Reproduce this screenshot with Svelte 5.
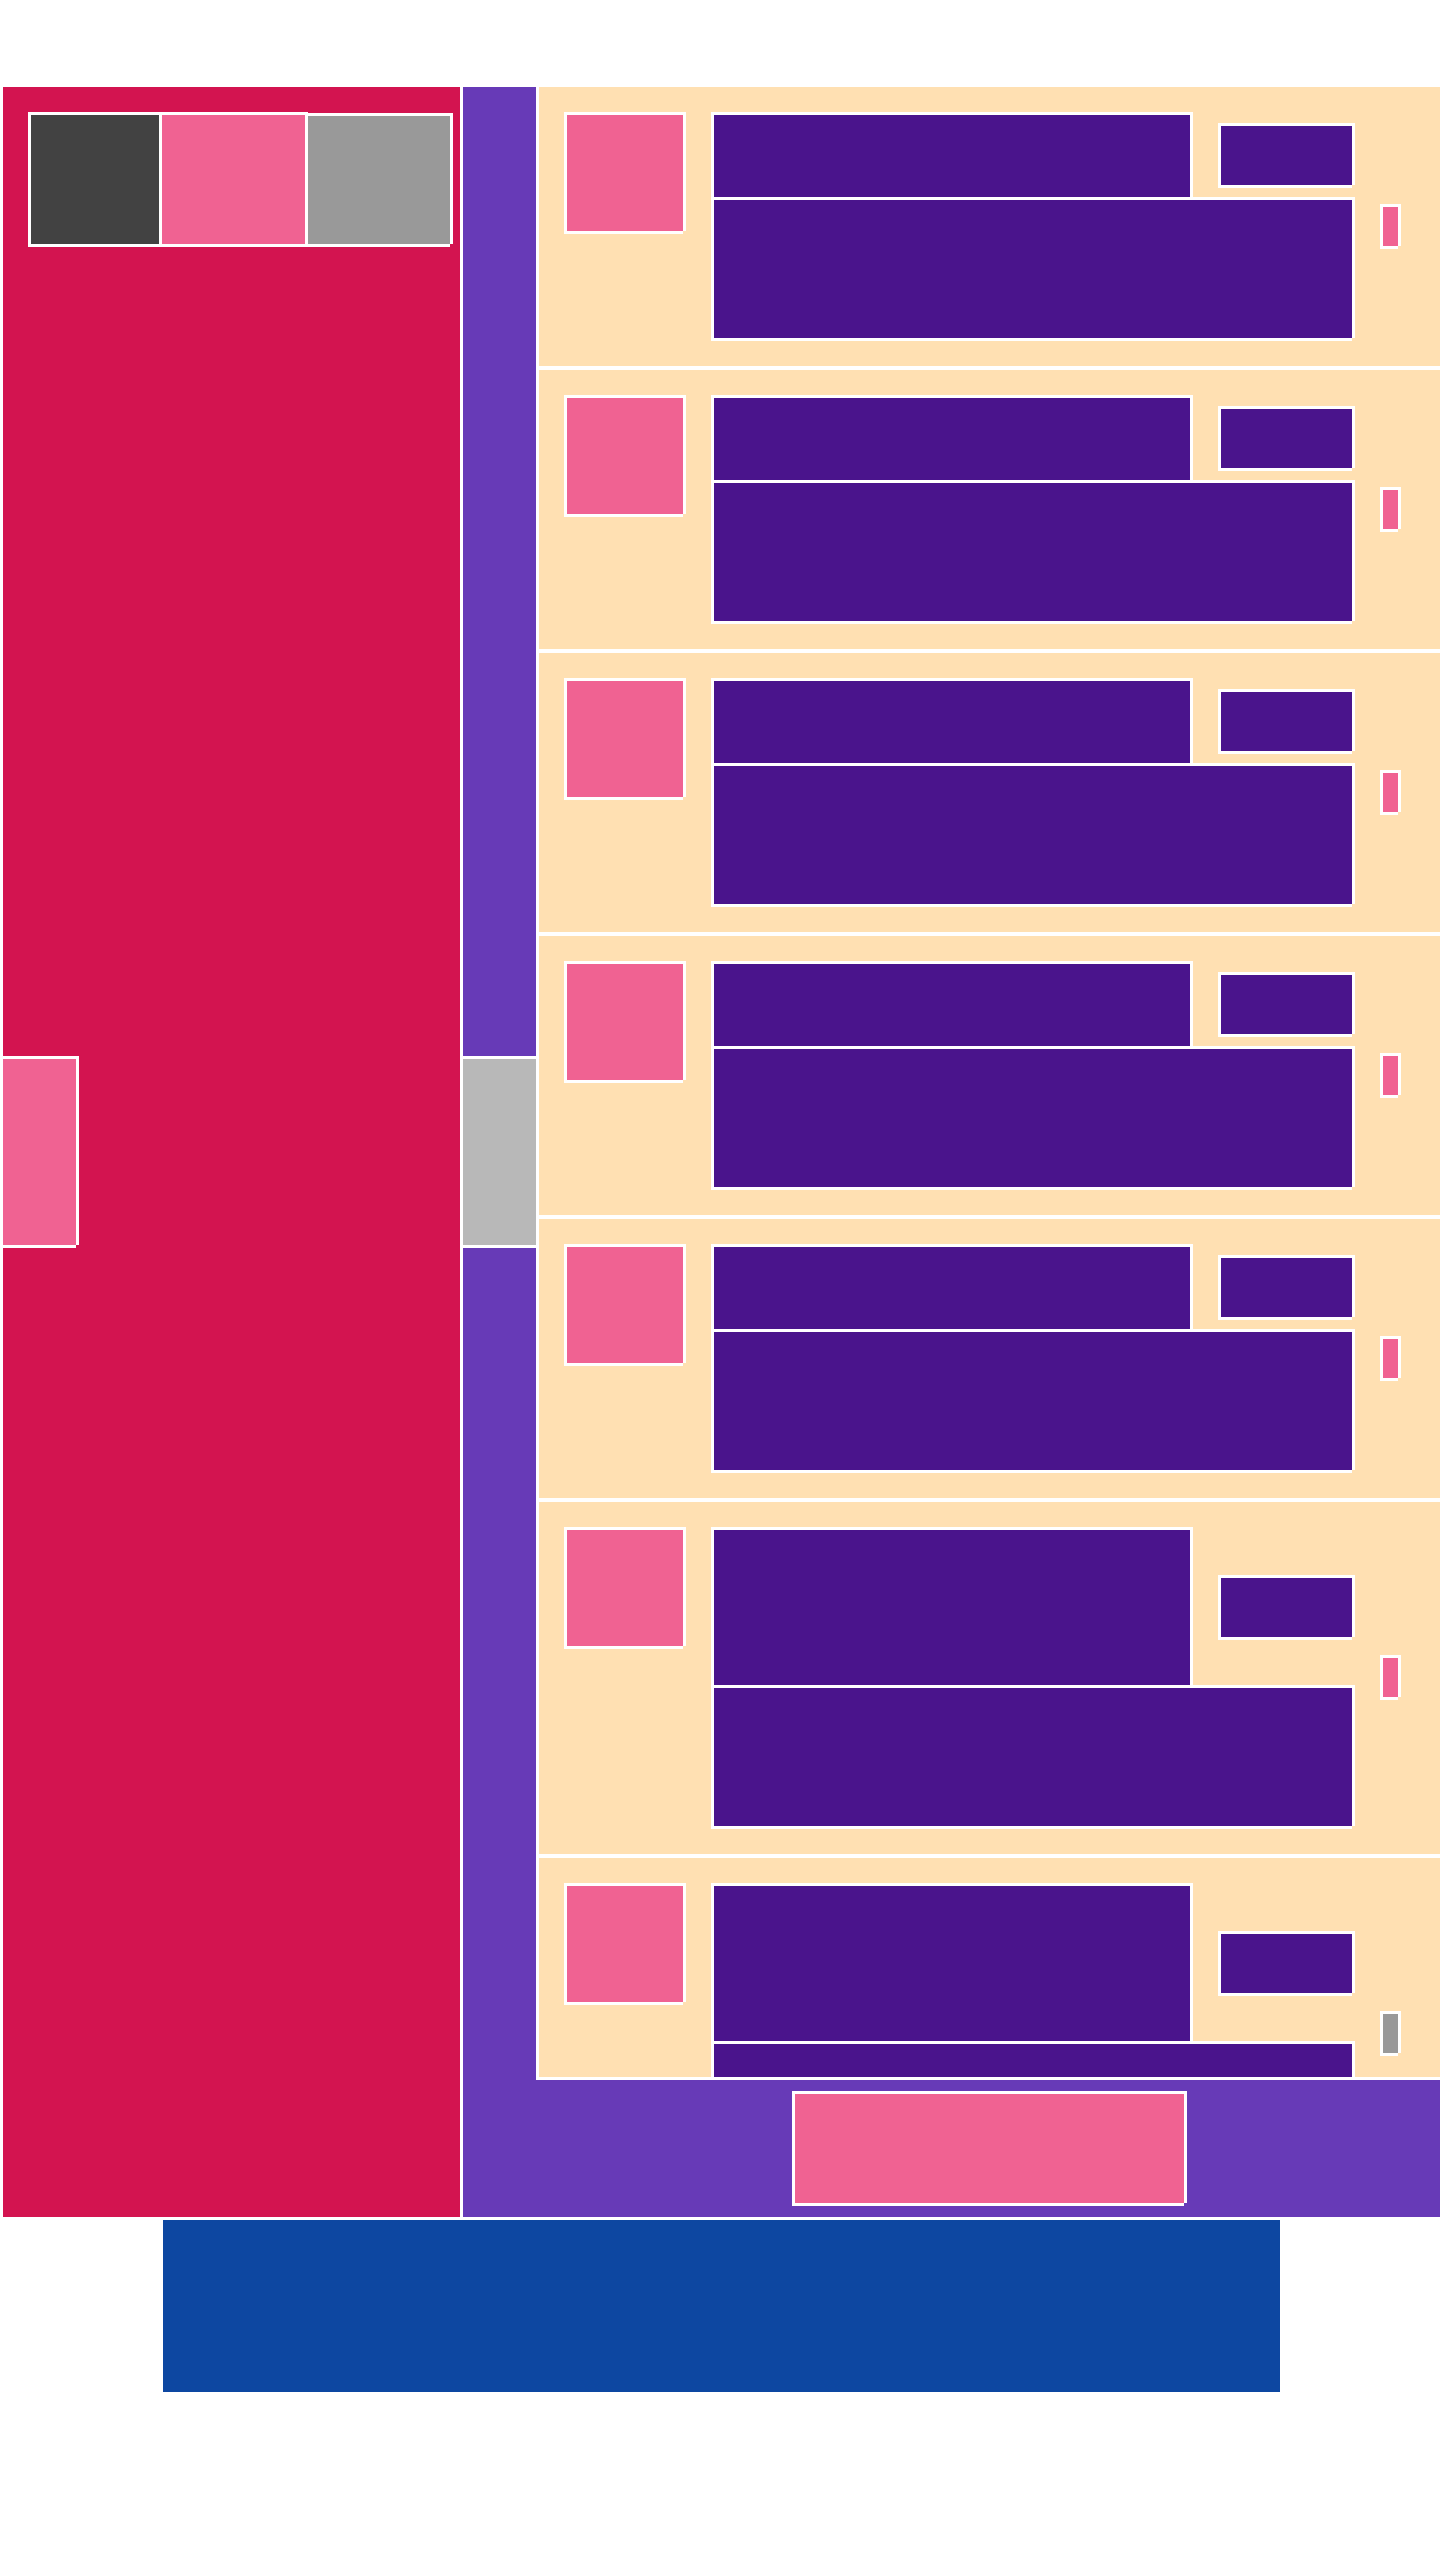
<script>
  const entries = [
    { tall: false, muted: false },
    { tall: false, muted: false },
    { tall: false, muted: false },
    { tall: false, muted: false },
    { tall: false, muted: false },
    { tall: true, muted: false },
    { tall: true, muted: true }
  ];
</script>

<div class="page">
  <main class="viewer">
    <section class="stage">
      <div class="tools">
        <button class="tool dark outlined" aria-label="Menu"></button>
        <button class="tool pink outlined" aria-label="Zoom"></button>
        <button class="tool grey outlined" aria-label="Share"></button>
      </div>
      <button class="prev pink outlined" aria-label="Previous"></button>
    </section>

    <section class="panel">
      <div class="rail">
        <button class="next" aria-label="Next"></button>
      </div>
      <div class="content">
        <ul class="list">
          {#each entries as entry}
            <li class="row">
              <div class="avatar pink outlined"></div>
              <div class="title ink outlined" class:tall={entry.tall}></div>
              <div class="meta ink outlined"></div>
              <div class="body ink outlined"></div>
              <button class="more outlined {entry.muted ? 'grey' : 'pink'}" aria-label="More"></button>
            </li>
          {/each}
        </ul>
        <div class="actions">
          <button class="submit pink outlined" aria-label="Submit"></button>
        </div>
      </div>
    </section>
  </main>
  <footer class="banner"></footer>
</div>

<style>
  :global(body) {
    margin: 0;
    background: #fff;
  }

  .page {
    padding: 87px 0 168px 3px;
  }

  button {
    display: block;
    margin: 0;
    padding: 0;
    border: 0;
    border-radius: 0;
    cursor: pointer;
  }

  /* White frame, open at the bottom right corner */
  .outlined {
    box-shadow:
      -3px -3px 0 #fff,
      3px -3px 0 #fff,
      -3px 3px 0 #fff,
      3px 0 0 #fff,
      0 3px 0 #fff;
  }

  .pink {
    background: #f06292;
  }

  .grey {
    background: #999;
  }

  .dark {
    background: #424242;
  }

  .ink {
    background: #4a148c;
  }

  .viewer {
    display: grid;
    grid-template-columns: 457px minmax(0, 1fr);
    column-gap: 3px;
  }

  .stage {
    display: grid;
    background: #d31450;
  }

  .tools {
    grid-area: 1 / 1;
    align-self: start;
    display: grid;
    grid-template-columns: 128px 143px 142px;
    align-items: end;
    gap: 3px;
    padding: 28px;
    padding-right: 0;
  }

  .tool {
    height: 129px;
  }

  .tool.grey {
    height: 128px;
  }

  .prev {
    grid-area: 1 / 1;
    align-self: center;
    width: 73px;
    height: 186px;
    clip-path: inset(-3px -3px -3px 0);
  }

  .panel {
    display: grid;
    grid-template-columns: 73px minmax(0, 1fr);
    background: #673ab7;
  }

  .rail {
    display: flex;
    align-items: center;
  }

  .next {
    width: 100%;
    height: 192px;
    border: solid #fff;
    border-width: 3px 0;
    background: #b8b8b8;
  }

  .list {
    display: flex;
    flex-direction: column;
    gap: 4px;
    max-height: 1990px;
    margin: 0;
    padding: 0;
    overflow: hidden;
    list-style: none;
    background: #fff;
    border: solid #fff;
    border-width: 0 0 3px 3px;
  }

  .row {
    flex: none;
    display: grid;
    grid-template-columns: 116px minmax(0, 1fr) 131px 15px;
    column-gap: 31px;
    row-gap: 3px;
    padding: 28px 42px 28px 28px;
    background: #ffe0b2;
  }

  .avatar {
    grid-row: 1 / 3;
    height: 116px;
  }

  .title {
    height: 82px;
  }

  .title.tall {
    height: 155px;
  }

  .meta {
    align-self: center;
    height: 59px;
    margin-bottom: 1px;
  }

  .body {
    grid-area: 2 / 2 / 3 / 4;
    height: 138px;
  }

  .more {
    grid-area: 1 / 4 / 3 / 5;
    align-self: center;
    height: 39px;
    margin-bottom: 1px;
  }

  .actions {
    display: flex;
    justify-content: center;
    padding: 14px 0 14px 3px;
  }

  .submit {
    width: 389px;
    height: 109px;
  }

  .banner {
    max-width: 1117px;
    height: 172px;
    margin: 3px auto 0;
    background: #0d47a1;
  }
</style>
